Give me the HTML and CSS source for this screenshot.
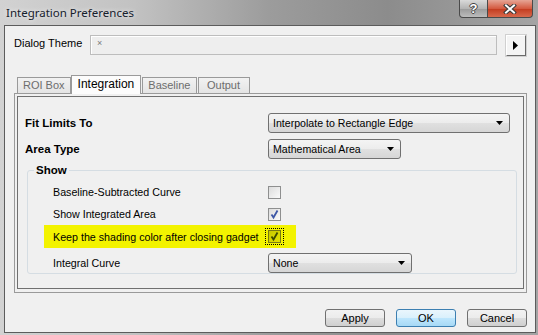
FILE: index.html
```html
<!DOCTYPE html>
<html lang="en">
  <head>
    <meta charset="UTF-8" />
    <title>Integration Preferences</title>
    <link rel="stylesheet" href="styles.css">
  </head>
  <body>
    <div class="window">
      <div class="titlebar">
        <span class="title">Integration Preferences</span>
        <div class="caption">
          <div class="cap cap-help">?</div>
          <div class="cap cap-close">
            <svg width="14" height="10" viewBox="0 0 14 10">
              <path d="M3 1.5 L11 8.5 M11 1.5 L3 8.5" stroke="#3a3a3a" stroke-width="4" stroke-linecap="square" />
              <path d="M3 1.5 L11 8.5 M11 1.5 L3 8.5" stroke="#fff" stroke-width="2" stroke-linecap="square" />
            </svg>
          </div>
        </div>
      </div>

      <div class="client">
        <div class="theme-row">
          <span class="theme-label">Dialog Theme</span>
          <div class="theme-box">×</div>
          <div class="arrow-btn">
            <svg width="6" height="9" viewBox="0 0 6 9"><path d="M0 0 L5 4.5 L0 9 Z" fill="#000" /></svg>
          </div>
        </div>

        <div class="tabs">
          <div class="tab">ROI Box</div>
          <div class="tab active">Integration</div>
          <div class="tab">Baseline</div>
          <div class="tab">Output</div>
        </div>

        <div class="panel">
          <div class="panel-inner">
            <div class="field-row">
              <span class="field-label">Fit Limits To</span>
              <div class="combo combo-wide">
                <span>Interpolate to Rectangle Edge</span>
                <svg width="7" height="4" viewBox="0 0 7 4"><path d="M0 0 L7 0 L3.5 4 Z" fill="#000" /></svg>
              </div>
            </div>
            <div class="field-row">
              <span class="field-label">Area Type</span>
              <div class="combo combo-mid">
                <span>Mathematical Area</span>
                <svg width="7" height="4" viewBox="0 0 7 4"><path d="M0 0 L7 0 L3.5 4 Z" fill="#000" /></svg>
              </div>
            </div>

            <fieldset class="group">
              <legend>Show</legend>
              <div class="check-row">
                <span class="row-label">Baseline-Subtracted Curve</span>
                <span class="checkbox"></span>
              </div>
              <div class="check-row">
                <span class="row-label">Show Integrated Area</span>
                <span class="checkbox">
                  <svg width="11" height="11" viewBox="0 0 11 11"><path d="M2.5 5.5 L4.5 8.5 L8.5 1.5" stroke="#3d57a6" stroke-width="1.8" fill="none" /></svg>
                </span>
              </div>
              <div class="check-row marked">
                <span class="row-label">Keep the shading color after closing gadget</span>
                <span class="focus">
                  <span class="checkbox">
                    <svg width="11" height="11" viewBox="0 0 11 11"><path d="M2.5 5.5 L4.5 8.5 L8.5 1.5" stroke="#3c4a00" stroke-width="1.8" fill="none" /></svg>
                  </span>
                </span>
              </div>
              <div class="check-row combo-row">
                <span class="row-label">Integral Curve</span>
                <div class="combo combo-small">
                  <span>None</span>
                  <svg width="7" height="4" viewBox="0 0 7 4"><path d="M0 0 L7 0 L3.5 4 Z" fill="#000" /></svg>
                </div>
              </div>
            </fieldset>
          </div>
        </div>

        <div class="buttons">
          <button>Apply</button>
          <button class="default">OK</button>
          <button>Cancel</button>
        </div>
      </div>
    </div>
  </body>
</html>
```

FILE: styles.css
```css
body {
  margin: 0;
  font-family: "Liberation Sans", Arial, sans-serif;
  font-size: 11px;
  color: #000;
}
.window {
  width: 538px;
  height: 335px;
  display: flex;
  flex-direction: column;
  background: linear-gradient(to right, #d2d2d2 0%, #c2c2c2 25%, #9c9c9c 50%, #8c8c8c 72%, #a4a4a4 100%);
}
.titlebar {
  height: 25px;
  display: flex;
  align-items: flex-start;
}
.title {
  flex: 1;
  padding: 5px 0 0 6px;
  font-family: "Noto Sans", sans-serif;
  font-size: 11.5px;
  color: #16202c;
  text-shadow: 0 0 5px rgba(255, 255, 255, 0.9);
}
.caption {
  display: flex;
  margin-right: 5px;
}
.cap {
  height: 17px;
  display: flex;
  align-items: center;
  justify-content: center;
  border: 1px solid #4a4a4a;
  border-top: none;
}
.cap-help {
  width: 27px;
  border-radius: 0 0 0 4px;
  background: linear-gradient(#dadada, #b4b4b4 50%, #9a9a9a 51%, #bcbcbc);
  color: #fff;
  font-weight: bold;
  font-size: 13px;
  text-shadow: 1px 0 0 #444, -1px 0 0 #444, 0 1px 0 #444, 0 -1px 0 #444;
}
.cap-close {
  width: 44px;
  border-left: none;
  border-radius: 0 0 4px 0;
  background: linear-gradient(#e6a595, #d45a40 50%, #c23a1e 51%, #d8694c);
}
.client {
  flex: 1;
  margin: 0 2px 2px 4px;
  border: 1px solid #5c5c5c;
  background: #f0f0f0;
  padding: 9px 8px 0 9px;
  display: flex;
  flex-direction: column;
}
.theme-row {
  display: flex;
  align-items: flex-start;
  height: 21px;
}
.theme-label {
  width: 76px;
  line-height: 16px;
}
.theme-box {
  width: 407px;
  height: 20px;
  box-sizing: border-box;
  border: 1px solid #bdbdbd;
  box-shadow: inset 1px 1px 0 #fff;
  background: #eeeeee;
  color: #7a7a7a;
  font-size: 9px;
  padding: 2px 0 0 6px;
}
.arrow-btn {
  width: 20px;
  height: 21px;
  margin-left: 9px;
  box-sizing: border-box;
  border: 1px solid;
  border-color: #fff #6a6a6a #6a6a6a #fff;
  box-shadow: 0 0 0 1px #d0d0d0;
  background: #f4f4f4;
  display: flex;
  align-items: center;
  justify-content: center;
}
.tabs {
  display: flex;
  align-items: flex-end;
  height: 19px;
  margin-top: 19px;
  margin-bottom: -1px;
  padding-left: 3px;
  position: relative;
  z-index: 1;
}
.tab {
  height: 16px;
  min-width: 52px;
  box-sizing: border-box;
  margin-bottom: 1px;
  padding: 0 5px;
  line-height: 15px;
  text-align: center;
  border: 1px solid #9a9a9a;
  border-bottom: none;
  margin-right: 1px;
  background: linear-gradient(#f2f2f2, #e4e4e4);
  color: #6d6d6d;
}
.tab.active {
  height: 19px;
  margin: 0 1px 0 -1px;
  padding: 1px 6px 0;
  font-size: 12px;
  background: #fcfcfc;
  color: #000;
}
.panel {
  height: 200px;
  box-sizing: border-box;
  border: 1px solid #9a9a9a;
  padding: 2px 2px 3px 2px;
  display: flex;
}
.panel-inner {
  flex: 1;
  border: 1px solid #707070;
  padding: 16px 0 0 7px;
}
.field-row {
  display: flex;
  align-items: center;
  height: 20px;
  margin-bottom: 6px;
}
.field-label {
  width: 243px;
  font-weight: bold;
  font-size: 11.5px;
}
.combo {
  height: 20px;
  box-sizing: border-box;
  border: 1px solid #707070;
  border-radius: 3px;
  background: linear-gradient(#f4f4f4, #ececec 50%, #e0e0e0 51%, #d6d6d6);
  display: flex;
  align-items: center;
  justify-content: space-between;
  padding: 0 6px 0 4px;
  font-size: 10.6px;
}
.combo-wide {
  width: 242px;
}
.combo-mid {
  width: 133px;
}
.combo-small {
  width: 144px;
}
.group {
  margin: -1px 6px 0 2px;
  padding: 4px 0 0 0;
  border: 1px solid #d5dde3;
  border-radius: 3px;
}
.group legend {
  margin-left: 6px;
  padding: 0 2px;
  font-weight: bold;
  font-size: 11.5px;
  line-height: 13px;
}
.check-row {
  display: flex;
  align-items: center;
  height: 22px;
  padding-left: 25px;
}
.row-label {
  width: 215px;
  font-size: 10.7px;
}
.check-row.marked {
  width: 252px;
  height: 23px;
  box-sizing: border-box;
  margin-left: 16px;
  padding-left: 9px;
  background: #f3f300;
}
.checkbox {
  width: 13px;
  height: 13px;
  box-sizing: border-box;
  border: 1px solid #8e8f8f;
  background: linear-gradient(135deg, #dcdcdc, #fafafa);
  display: flex;
  align-items: center;
  justify-content: center;
}
.focus {
  margin-left: -2px;
  padding: 1px 2px;
  outline: 1px dotted #000;
}
.marked .checkbox {
  border-color: #7a7a10;
  background: linear-gradient(135deg, #c8c800, #e4e400);
}
.combo-row {
  margin-top: 5px;
  height: 20px;
}
.buttons {
  display: flex;
  justify-content: flex-end;
  gap: 11px;
  margin-top: 16px;
}
button {
  width: 60px;
  height: 18px;
  padding: 0;
  font-family: "Liberation Sans", Arial, sans-serif;
  font-size: 11px;
  color: #000;
  border: 1px solid #707070;
  border-radius: 3px;
  background: linear-gradient(#f2f2f2, #ebebeb 50%, #dddddd 51%, #cfcfcf);
}
button.default {
  border-color: #3c7fb1;
  background: linear-gradient(#eaf6fd, #d9f0fc 50%, #bee6fd 51%, #a7d9f5);
}
```
